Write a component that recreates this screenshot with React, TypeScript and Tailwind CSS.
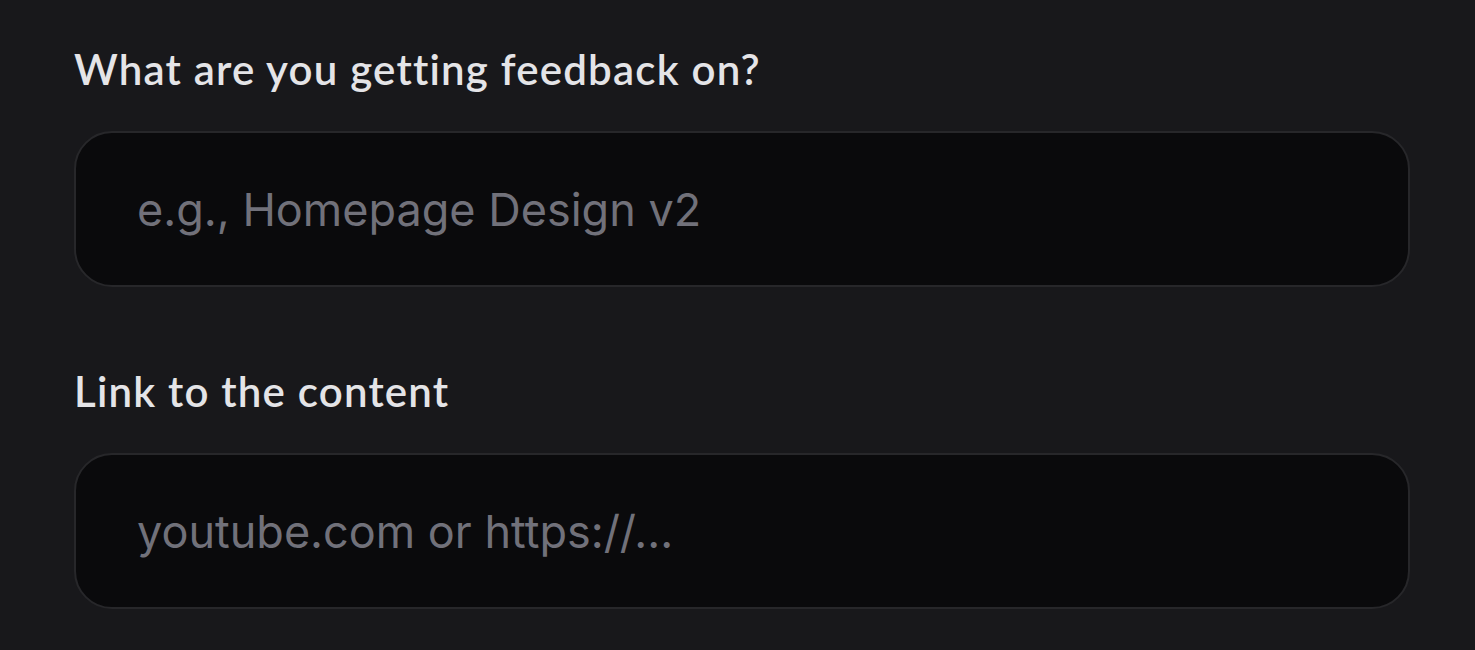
import React from 'react';

const fields = [
  { label: 'What are you getting feedback on?', placeholder: 'e.g., Homepage Design v2' },
  { label: 'Link to the content', placeholder: 'youtube.com or https://...' },
];

export default function App() {
  return (
    <div className="min-h-screen w-full bg-[#18181b] pt-[45px] pl-[74px] pr-[65px]">
      <div className="flex flex-col gap-[80px]">
        {fields.map((f) => (
          <div key={f.label} className="flex flex-col gap-[38px]">
            <label className="text-[42px] leading-[48px] font-semibold text-[#e4e4e7] [font-family:Lato,'Noto_Sans',sans-serif] tracking-[1.2px]">
              {f.label}
            </label>
            <input
              type="text"
              placeholder={f.placeholder}
              className="h-[156px] w-full rounded-[38px] border-2 border-[#27272a] bg-[#0a0a0c] px-[61px] text-[45px] text-[#e4e4e7] placeholder:text-[#71717a] outline-none [font-family:Inter,sans-serif]"
            />
          </div>
        ))}
      </div>
    </div>
  );
}
